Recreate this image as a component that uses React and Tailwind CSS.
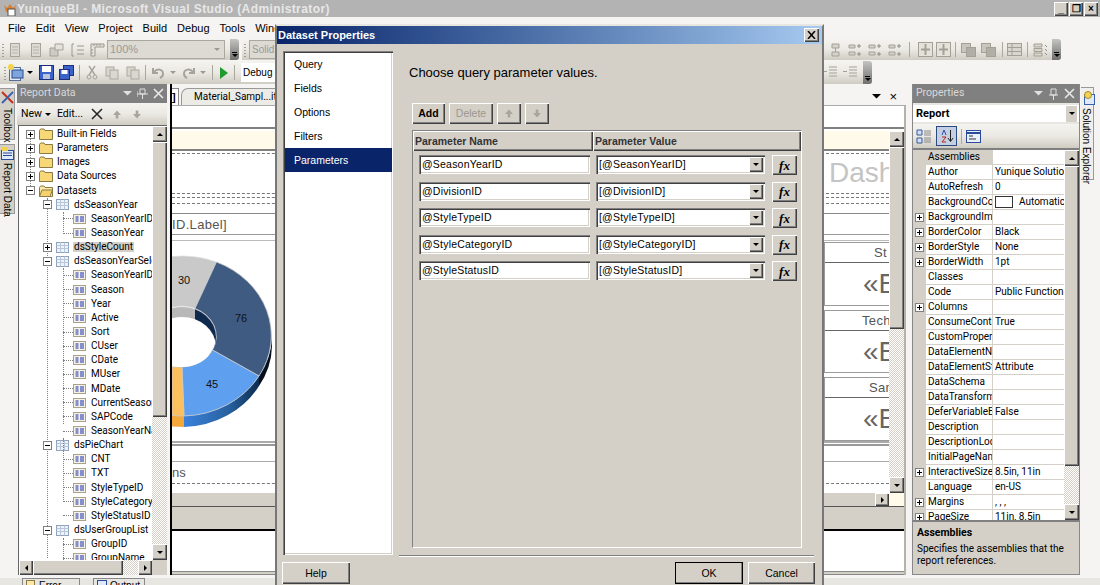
const raised = "bg-[#d4d0c8] shadow-[inset_1px_1px_0_#fff,inset_-1px_-1px_0_#404040,inset_-2px_-2px_0_#808080]";
const sunken = "shadow-[inset_1px_1px_0_#808080,inset_2px_2px_0_#404040,inset_-1px_-1px_0_#fff,inset_-2px_-2px_0_#d4d0c8]";
const toolbarBg = "bg-gradient-to-b from-[#f4f3ef] via-[#ebe9e3] to-[#cfccc3]";
const dither = "bg-[repeating-conic-gradient(#d4d0c8_0_25%,#fff_0_50%)] bg-[length:2px_2px]";

function Arrow({ dir = "down", color = "#000", big }) {
  const pts = { down: "0,0 6,0 3,3", up: "3,0 6,3 0,3", left: "3,0 3,6 0,3", right: "0,0 3,3 0,6" }[dir];
  const box = dir === "left" || dir === "right" ? [3, 6] : [6, 3];
  const k = big ? 1.5 : 1;
  return (
    <svg width={box[0] * k} height={box[1] * k} viewBox={`0 0 ${box[0]} ${box[1]}`} className="shrink-0">
      <polygon points={pts} fill={color} />
    </svg>
  );
}

function ScrollBtn({ dir, className = "" }) {
  return <div className={`${raised} flex items-center justify-center shrink-0 ${className}`}><Arrow dir={dir} /></div>;
}

function VScroll({ thumb, className = "" }) {
  return (
    <div className={`w-[15px] flex flex-col shrink-0 ${dither} ${className}`}>
      <ScrollBtn dir="up" className="h-[16px]" />
      <div className={`${raised} shrink-0`} style={{ height: thumb }} />
      <div className="flex-1" />
      <ScrollBtn dir="down" className="h-[16px]" />
    </div>
  );
}

function Expander({ open }) {
  return (
    <svg width="9" height="9" viewBox="0 0 9 9" className="shrink-0 bg-white relative">
      <rect x="0.5" y="0.5" width="8" height="8" fill="#fff" stroke="#808080" />
      <path d={open ? "M2 4.5h5" : "M2 4.5h5M4.5 2v5"} stroke="#000" />
    </svg>
  );
}

function Folder({ open }) {
  return (
    <svg width="14" height="12" viewBox="0 0 14 12" className="shrink-0">
      <path d="M0.5 2.5 L1.5 1 H5 L6 2.5 H13.5 V11.5 H0.5 Z" fill={open ? "#fbe7a6" : "#f8d777"} stroke="#8a7a45" />
      {open && <path d="M0.5 11.5 L3 5 H13.5 L11 11.5 Z" fill="#f6d26e" stroke="#8a7a45" />}
    </svg>
  );
}

function TableIcon() {
  return (
    <svg width="13" height="11" viewBox="0 0 13 11" className="shrink-0">
      <rect x="0.5" y="0.5" width="12" height="10" fill="#eef3fb" stroke="#8ea2bc" />
      <path d="M0.5 3.5h12M0.5 6.5h12M4.5 0.5v10M8.5 0.5v10" stroke="#b9c6d8" />
    </svg>
  );
}

function FieldIcon() {
  return (
    <svg width="13" height="10" viewBox="0 0 13 10" className="shrink-0">
      <rect x="0.5" y="0.5" width="12" height="9" fill="#f4f1e6" stroke="#a9a288" />
      <path d="M2.5 3h3M2.5 5h3M2.5 7h3M7 3h4M7 5h4M7 7h4" stroke="#1a2fb0" />
    </svg>
  );
}

const treeRows = [
  [0, "Built-in Fields"], [0, "Parameters"], [0, "Images"], [0, "Data Sources"], [0, "Datasets", "open"],
  [1, "dsSeasonYear", "open"], [2, "SeasonYearID"], [2, "SeasonYear"],
  [1, "dsStyleCount", "sel"], [1, "dsSeasonYearSele", "open"],
  [2, "SeasonYearID"], [2, "Season"], [2, "Year"], [2, "Active"], [2, "Sort"], [2, "CUser"], [2, "CDate"], [2, "MUser"], [2, "MDate"],
  [2, "CurrentSeason"], [2, "SAPCode"], [2, "SeasonYearNa"],
  [1, "dsPieChart", "open"], [2, "CNT"], [2, "TXT"], [2, "StyleTypeID"], [2, "StyleCategory"], [2, "StyleStatusID"],
  [1, "dsUserGroupList", "open"], [2, "GroupID"], [2, "GroupName"],
];

function TreeRow({ level, label, flag }) {
  return (
    <div className="h-[14.15px] flex items-center whitespace-nowrap">
      {level === 0 && (
        <div className="flex items-center pl-[7px] gap-[4px]">
          <Expander open={flag === "open"} />
          <Folder open={flag === "open"} />
          <span>{label}</span>
        </div>
      )}
      {level === 1 && (
        <div className="flex items-center pl-[24px] gap-[4px]">
          <Expander open={flag === "open"} />
          <TableIcon />
          <span className={`px-[1px] ${flag === "sel" ? "bg-[#d4d0c8]" : ""}`}>{label}</span>
        </div>
      )}
      {level === 2 && (
        <div className="flex items-center pl-[44px]">
          <div className="w-[10px] border-t border-dotted border-[#808080]" />
          <FieldIcon />
          <span className="ml-[5px]">{label}</span>
        </div>
      )}
    </div>
  );
}

function ReportDataPanel() {
  return (
    <div className="w-[150px] flex flex-col shrink-0 mr-[3px] mb-[3px] font-['Roboto',sans-serif]">
      <div className="h-[19px] bg-[#808080] flex items-center text-[#d8d8d8] pl-[3px] shrink-0 text-[10.5px]">
        <span className="flex-1">Report Data</span>
        <Arrow color="#e0e0e0" big />
        <svg width="11" height="11" viewBox="0 0 11 11" className="ml-[5px]"><path d="M3 1h5v5H3zM0 6h11M5.5 6v5M0 3v6" stroke="#e0e0e0" fill="none" /></svg>
        <svg width="11" height="11" viewBox="0 0 11 11" className="ml-[5px] mr-[3px]"><path d="M1 1l9 9M10 1l-9 9" stroke="#e8e8e8" strokeWidth="1.6" /></svg>
      </div>
      <div className={`h-[22px] flex items-center pl-[4px] gap-[3px] shrink-0 text-[10.5px] ${toolbarBg}`}>
        <span>New</span><Arrow />
        <span className="ml-[3px]">Edit...</span>
        <svg width="12" height="12" viewBox="0 0 12 12" className="ml-[5px]"><path d="M1 1l10 10M11 1L1 11" stroke="#222" strokeWidth="1.5" /></svg>
        <svg width="8" height="9" viewBox="0 0 9 9" className="ml-[7px]"><path d="M4.5 0L9 5H6v4H3V5H0z" fill="#a8a59d" /></svg>
        <svg width="8" height="9" viewBox="0 0 9 9" className="ml-[9px]"><path d="M4.5 9L9 4H6V0H3v4H0z" fill="#a8a59d" /></svg>
      </div>
      <div className="flex-1 min-h-0 flex flex-col bg-[#d4d0c8] border-t border-l border-[#666] ml-[1px]">
        <div className="flex-1 min-h-0 flex">
          <div className="flex-1 min-w-0 bg-white overflow-hidden relative pt-[1px]">
            <div className="absolute left-[11px] top-[8px] h-[58px] border-l border-dotted border-[#808080]" />
            <div className="absolute left-[28px] top-[72px] h-[360px] border-l border-dotted border-[#808080]" />
            <div className="absolute left-[44px] top-[86px] h-[20px] border-l border-dotted border-[#808080]" />
            <div className="absolute left-[44px] top-[142px] h-[156px] border-l border-dotted border-[#808080]" />
            <div className="absolute left-[44px] top-[312px] h-[64px] border-l border-dotted border-[#808080]" />
            <div className="absolute left-[44px] top-[412px] h-[24px] border-l border-dotted border-[#808080]" />
            {treeRows.map((r, i) => <TreeRow key={i} level={r[0]} label={r[1]} flag={r[2]} />)}
          </div>
          <VScroll thumb={275} />
        </div>
        <div className="h-[15px] flex shrink-0 mr-[15px]">
          <ScrollBtn dir="left" className="w-[14px]" />
          <div className={`${raised} w-[90px]`} />
          <div className={`flex-1 ${dither}`} />
          <ScrollBtn dir="right" className="w-[14px]" />
        </div>
      </div>
    </div>
  );
}

function Donut() {
  return (
    <svg width="106" height="190" viewBox="171 245 106 190" className="shrink-0 mt-[4px]">
      <defs>
        <linearGradient id="side" x1="0" x2="1" y1="0" y2="0">
          <stop offset="0" stopColor="#3b82dc" />
          <stop offset="0.6" stopColor="#27609f" />
          <stop offset="1" stopColor="#0d2c50" />
        </linearGradient>
        <clipPath id="hole"><ellipse cx="181" cy="337" rx="34" ry="30" /></clipPath>
      </defs>
      <path d="M258 376 A90 80 0 0 0 271 336 L271 346 A90 80 0 0 1 258 386 Z" fill="#06101f" />
      <path d="M258 376 A90 80 0 0 1 183 416 L183 427 A90 80 0 0 0 258 386 Z" fill="url(#side)" />
      <path d="M183 416 A90 80 0 0 1 171 415.5 L171 426.5 L183 427 Z" fill="#f5a83a" />
      <path d="M171 256.5 A90 80 0 0 1 215.5 262 L194 308.5 A34 30 0 0 0 171 307.5 Z" fill="#c9c9c9" stroke="#ddd" strokeWidth="0.6" />
      <path d="M215.5 262 A90 80 0 0 1 258 376 L211.5 350 A34 30 0 0 0 194 308.5 Z" fill="#3f5b82" stroke="#c8c8c8" strokeWidth="0.8" />
      <path d="M258 376 A90 80 0 0 1 183 416 L181 367 A34 30 0 0 0 211.5 350 Z" fill="#5f9ff0" stroke="#c8c8c8" strokeWidth="0.8" />
      <path d="M183 416 A90 80 0 0 1 171 415.5 L171 367 L181 367 Z" fill="#fbbf5e" stroke="#c8c8c8" strokeWidth="0.8" />
      <g clipPath="url(#hole)">
        <rect x="171" y="305" width="23" height="20" fill="#b8b8b8" />
        <rect x="194" y="305" width="24" height="50" fill="#10294f" />
        <ellipse cx="181" cy="347" rx="34" ry="30" fill="#fff" />
      </g>
      <g fontSize="11" fill="#111" fontFamily="'Liberation Sans', sans-serif" textAnchor="middle">
        <text x="183" y="284">30</text>
        <text x="240" y="322">76</text>
        <text x="211" y="388">45</text>
      </g>
    </svg>
  );
}

function ReportCard({ title, pl }) {
  return (
    <div className="h-[64px] border border-r-0 border-[#9a9a9a] overflow-hidden whitespace-nowrap text-[#555]">
      <div className="h-[20px] border-b border-[#666] flex items-center text-[13px] tracking-wide" style={{ paddingLeft: pl }}>{title}</div>
      <div className="pl-[38px] text-[28px] leading-[42px] text-[#666]">«E</div>
    </div>
  );
}

function ReportCanvas() {
  return (
    <div className="w-[736px] shrink-0 border-l-2 border-black flex flex-col min-h-0 mb-[3px]">
      <div className="h-[22px] flex items-start pt-[4px] shrink-0 bg-[#f5f4f2] border-b border-[#aaa]">
        <div className="h-[17px] w-[7px] bg-white border-t border-r border-[#888] text-[11px] flex items-center font-bold shrink-0">]</div>
        <div className="h-[17px] w-[96px] ml-[2px] border-t border-l border-[#999] rounded-tl-[7px] bg-[#ecebe6] overflow-hidden whitespace-nowrap pl-[12px] leading-[15px] font-['Roboto',sans-serif]">Material_Sampl...it</div>
        <div className="flex-1" />
        <div className="flex items-center gap-[8px] pr-[9px] pt-[2px]"><Arrow big /><span className="text-[13px] leading-none">×</span></div>
      </div>
      <div className="flex-1 min-h-0 flex flex-col border-r-2 border-[#b5b2aa]">
        <div className="h-[21px] bg-white shrink-0" />
        <div className="h-[2px] bg-[#808080] shrink-0" />
        <div className="h-[2px] bg-white shrink-0" />
        <div className="flex h-[362px] shrink-0">
          <div className="flex-1 min-w-0 flex flex-col overflow-hidden bg-white">
            <div className="h-[18px] bg-[#fffaea] shrink-0" />
            <div className="h-[2px] bg-[#808080] shrink-0" />
            <div className="h-[3px] border-b border-dashed border-[#777] shrink-0" />
            <div className="h-[40px] border-b border-dashed border-[#777] flex justify-end shrink-0">
              <div className="w-[60px] overflow-hidden text-[28px] leading-[38px] text-[#c4c4c4]">Dash</div>
            </div>
            <div className="h-[4px] border-b border-dashed border-[#777] shrink-0" />
            <div className="h-[6px] border-b border-dashed border-[#777] shrink-0" />
            <div className="h-[10px] border-b border-[#888] shrink-0" />
            <div className="h-[21px] border-b border-[#999] flex items-center text-[13px] text-[#555] tracking-wide shrink-0 whitespace-nowrap">ID.Label]</div>
            <div className="h-[6px] border-b border-[#bbb] shrink-0" />
            <div className="h-[202px] border-b-2 border-[#aaa] flex justify-between shrink-0">
              <Donut />
              <div className="w-[65px] shrink-0 flex flex-col gap-[4px] pt-[1px]">
                <ReportCard title="St" pl={49} />
                <ReportCard title="Tech" pl={37} />
                <ReportCard title="Sam" pl={44} />
              </div>
            </div>
            <div className="h-[3px] border-b-2 border-[#999] shrink-0" />
            <div className="h-[16px] border-b border-[#aaa] shrink-0" />
            <div className="h-[22px] border-b border-dashed border-[#777] flex items-center text-[13px] text-[#555] shrink-0">ns</div>
          </div>
          <VScroll thumb={182} />
        </div>
        <div className="h-[14px] flex shrink-0 bg-[#d4d0c8] border-b border-[#555]">
          <div className="flex-1" />
          <ScrollBtn dir="right" className="w-[14px]" />
          <div className="w-[15px] bg-[#fffaea]" />
        </div>
        <div className="h-[24px] bg-[#d4d0c8] border-b-2 border-black shrink-0" />
        <div className="h-[40px] bg-white shrink-0" />
        <div className="flex-1 bg-[#d4d0c8] border-y border-[#888]" />
      </div>
    </div>
  );
}

const props = [
  ["Assemblies", "", 0], ["Author", "Yunique Solution", 0], ["AutoRefresh", "0", 0], ["BackgroundCol", "swatch", 0],
  ["BackgroundIma", "", 1], ["BorderColor", "Black", 1], ["BorderStyle", "None", 1], ["BorderWidth", "1pt", 1],
  ["Classes", "", 0], ["Code", "Public Function F", 0], ["Columns", "", 1], ["ConsumeConta", "True", 0],
  ["CustomPropert", "", 0], ["DataElementNa", "", 0], ["DataElementSt", "Attribute", 0], ["DataSchema", "", 0],
  ["DataTransform", "", 0], ["DeferVariableE", "False", 0], ["Description", "", 0], ["DescriptionLocl", "", 0],
  ["InitialPageNam", "", 0], ["InteractiveSize", "8.5in, 11in", 1], ["Language", "en-US", 0], ["Margins", ", , ,", 1], ["PageSize", "11in, 8.5in", 1],
];

function PropRow({ name, value, plus, index }) {
  return (
    <div className="h-[15px] flex shrink-0 border-b border-[#d4d0c8] whitespace-nowrap">
      <div className="w-[13px] bg-[#d4d0c8] flex items-center justify-center shrink-0">{plus ? <Expander /> : null}</div>
      <div className={`w-[67px] pl-[2px] overflow-hidden border-r border-[#d4d0c8] shrink-0 leading-[14px] ${index === 0 ? "bg-[#d4d0c8]" : ""}`}>{name}</div>
      <div className="flex-1 min-w-0 pl-[2px] overflow-hidden leading-[14px] flex items-center">
        {value === "swatch" ? (
          <>
            <div className="w-[18px] h-[12px] bg-white border border-[#333] shrink-0" />
            <span className="ml-[6px]">Automatic</span>
          </>
        ) : value}
      </div>
    </div>
  );
}

function PropertiesPanel() {
  return (
    <div className="w-[168px] shrink-0 flex flex-col border-x border-[#888] border-b mb-[3px] font-['Roboto',sans-serif]">
      <div className="h-[19px] bg-[#808080] flex items-center text-[#d8d8d8] pl-[3px] shrink-0 text-[10.5px]">
        <span className="flex-1">Properties</span>
        <Arrow color="#e0e0e0" big />
        <svg width="9" height="12" viewBox="0 0 9 12" className="ml-[6px]"><path d="M2 1h5v6H2zM0 7h9M4.5 7v5" stroke="#e0e0e0" fill="none" /></svg>
        <svg width="11" height="11" viewBox="0 0 11 11" className="ml-[6px] mr-[4px]"><path d="M1 1l9 9M10 1l-9 9" stroke="#e8e8e8" strokeWidth="1.6" /></svg>
      </div>
      <div className="h-[21px] bg-white border-y-2 border-[#e8e6e0] flex items-center pl-[3px] font-bold text-[11px] shrink-0 pr-[2px]">
        <span className="flex-1">Report</span>
        <div className="w-[11px] h-[16px] bg-[#d4d0c8] flex items-center justify-center"><Arrow /></div>
      </div>
      <div className={`h-[24px] flex items-center pl-[3px] gap-[2px] shrink-0 ${toolbarBg}`}>
        <svg width="16" height="15" viewBox="0 0 16 15"><path d="M1 1h5v5H1zM1 9h5v5H1z" fill="#cfe0f7" stroke="#345a9c" /><path d="M8 2h7M8 4h7M8 6h7M8 9h7M8 11h7M8 13h7" stroke="#8a8a8a" /></svg>
        <div className="w-[21px] h-[20px] bg-[#c4cfe2] border border-[#2c4a82] flex items-center justify-center ml-[2px]">
          <svg width="14" height="14" viewBox="0 0 14 14"><path d="M10.5 1v11M8 9l2.5 3.5L13 9" stroke="#222" fill="none" /><path d="M2 6l2-5 2 5" stroke="#2a4db0" fill="none" /><path d="M2 8h4l-4 5h4" stroke="#c02020" fill="none" /></svg>
        </div>
        <div className="w-[1px] h-[15px] bg-[#aaa] mx-[2px]" />
        <svg width="15" height="13" viewBox="0 0 15 13"><rect x="0.5" y="0.5" width="14" height="12" fill="#e8f0fb" stroke="#2c4a9c" /><path d="M0.5 3h14" stroke="#2c4a9c" strokeWidth="2" /><path d="M3 6h4M3 9h7" stroke="#333" /></svg>
      </div>
      <div className="flex-1 min-h-0 flex border-t-2 border-[#808080] bg-white">
        <div className="flex-1 min-w-0 flex flex-col overflow-hidden">
          {props.map((p, i) => <PropRow key={i} index={i} name={p[0]} value={p[1]} plus={p[2]} />)}
        </div>
        <VScroll thumb={300} />
      </div>
      <div className="h-[54px] bg-[#d4d0c8] border-t-2 border-[#808080] px-[4px] pt-[5px] shrink-0 leading-[12px]">
        <div className="font-bold mb-[4px] text-[10.5px]">Assemblies</div>
        <div>Specifies the assemblies that the report references.</div>
      </div>
    </div>
  );
}

const ToolGlyph = ({ kind }) => {
  if (kind === "grip") return <svg width="3" height="14" viewBox="0 0 3 14" className="shrink-0"><path d="M1 1v1M1 4v1M1 7v1M1 10v1M1 13v1" stroke="#8a8a80" strokeWidth="1.5" /></svg>;
  if (kind === "sep") return <div className="w-[1px] h-[15px] bg-[#aaa89e] shrink-0" />;
  if (kind === "doc") return <svg width="12" height="14" viewBox="0 0 12 14" className="shrink-0"><rect x="1.5" y="0.5" width="9" height="13" fill="#dcdad2" stroke="#a6a49a" /><path d="M3 4h6M3 7h6M3 10h6" stroke="#b5b3a9" /></svg>;
  if (kind === "props") return <svg width="15" height="14" viewBox="0 0 15 14" className="shrink-0"><path d="M1 5h8v8H1z" fill="#cdcbc2" stroke="#a3a197" /><path d="M6 1h8v6H6z" fill="#e4e2da" stroke="#a3a197" /></svg>;
  if (kind === "align") return <svg width="15" height="14" viewBox="0 0 15 14" className="shrink-0"><path d="M4 1H2v12h2M7 3h7M7 7h7M7 11h7" stroke="#9a988e" fill="none" /></svg>;
  if (kind === "ruler") return <svg width="15" height="14" viewBox="0 0 15 14" className="shrink-0"><path d="M1 1h13v3H5v9H1z" fill="#e4e2da" stroke="#9a988e" /><path d="M4 1v2M7 1v2M10 1v2M1 7h2M1 10h2" stroke="#9a988e" /></svg>;
  if (kind === "save") return <svg width="15" height="15" viewBox="0 0 15 15" className="shrink-0"><rect x="0.5" y="0.5" width="14" height="14" fill="#3a62c8" stroke="#1c2f78" /><rect x="3" y="1" width="9" height="6" fill="#fff" /><rect x="4" y="9" width="7" height="5" fill="#b9c4de" /></svg>;
  if (kind === "saveall") return <svg width="15" height="15" viewBox="0 0 15 15" className="shrink-0"><rect x="4.5" y="0.5" width="10" height="10" fill="#3a62c8" stroke="#1c2f78" /><rect x="0.5" y="4.5" width="10" height="10" fill="#3a62c8" stroke="#1c2f78" /><rect x="2.5" y="5" width="6" height="4" fill="#fff" /></svg>;
  if (kind === "new") return <svg width="18" height="17" viewBox="0 0 18 17" className="shrink-0"><rect x="2.5" y="3.5" width="11" height="13" fill="#dfe9f7" stroke="#566e9c" /><rect x="5" y="6" width="11" height="8" fill="#7fa6dc" stroke="#2c4a8c" /><circle cx="4" cy="3" r="3" fill="#f4d34c" /></svg>;
  if (kind === "cut") return <svg width="12" height="15" viewBox="0 0 12 15" className="shrink-0"><path d="M3 1l6 9M9 1l-6 9" stroke="#a5a39a" strokeWidth="1.4" /><circle cx="3" cy="12" r="2" fill="none" stroke="#a5a39a" /><circle cx="9" cy="12" r="2" fill="none" stroke="#a5a39a" /></svg>;
  if (kind === "copy") return <svg width="14" height="14" viewBox="0 0 14 14" className="shrink-0"><rect x="1" y="1" width="8" height="9" fill="#d9d7cf" stroke="#aaa89e" /><rect x="5" y="4" width="8" height="9" fill="#d9d7cf" stroke="#aaa89e" /></svg>;
  if (kind === "undo") return <svg width="13" height="13" viewBox="0 0 13 13" className="shrink-0"><path d="M1 2v5h5M2 6c3-4 9-3 9 2 0 2-1 3-3 4" fill="none" stroke="#a5a39a" strokeWidth="2" /></svg>;
  if (kind === "redo") return <svg width="13" height="13" viewBox="0 0 13 13" className="shrink-0"><path d="M12 2v5H7M11 6C8 2 2 3 2 8c0 2 1 3 3 4" fill="none" stroke="#a5a39a" strokeWidth="2" /></svg>;
  if (kind === "play") return <svg width="8" height="12" viewBox="0 0 8 12" className="shrink-0"><polygon points="0,0 8,6 0,12" fill="#1f9a2e" /></svg>;
  if (kind === "drop") return <Arrow color="#999" />;
  if (kind === "dropk") return <Arrow />;
  if (kind === "layout") return <svg width="13" height="14" viewBox="0 0 13 14" className="shrink-0"><path d="M3 1h7v4H3zM3 9h7v4H3zM6.5 5v4" fill="#d5d3ca" stroke="#a3a197" /></svg>;
  if (kind === "dist") return <svg width="15" height="14" viewBox="0 0 15 14" className="shrink-0"><path d="M1 2h6v3H1zM1 9h6v3H1z" fill="#d5d3ca" stroke="#a3a197" /><path d="M11 1v4M9 3h4M11 9v4M9 11h4" stroke="#8f8d85" /></svg>;
  if (kind === "box") return <svg width="15" height="15" viewBox="0 0 15 15" className="shrink-0"><rect x="0.5" y="0.5" width="14" height="14" fill="#e4e2da" stroke="#a3a197" /><path d="M7.5 2v11M3 7.5h9" stroke="#a3a197" strokeWidth="2" /></svg>;
  if (kind === "stack") return <svg width="15" height="14" viewBox="0 0 15 14" className="shrink-0"><rect x="0.5" y="0.5" width="9" height="9" fill="#c8c6bd" stroke="#a3a197" /><rect x="5.5" y="4.5" width="9" height="9" fill="#b0aea5" stroke="#a3a197" /></svg>;
  if (kind === "grid") return <svg width="15" height="13" viewBox="0 0 15 13" className="shrink-0"><rect x="0.5" y="0.5" width="14" height="12" fill="#d8d6cd" stroke="#a3a197" /><path d="M0.5 4.5h14M0.5 8.5h14M5 0.5v12" stroke="#a3a197" /></svg>;
  if (kind === "rows") return <svg width="15" height="14" viewBox="0 0 15 14" className="shrink-0"><path d="M1 1h8v3H1zM1 5.5h8v3H1zM1 10h8v3H1z" fill="#d8d6cd" stroke="#a3a197" /><path d="M12 2l2 2M12 6l2 2M12 10l2 2" stroke="#8f8d85" /></svg>;
  if (kind === "indent") return <svg width="14" height="13" viewBox="0 0 14 13" className="shrink-0"><path d="M6 1h8M6 4h8M6 7h8M6 10h8M0 5.5h4" stroke="#a3a197" /></svg>;
  return null;
};

function Chevron() {
  return (
    <div className="w-[9px] h-full bg-gradient-to-b from-[#c4c4c0] to-[#6f6f6f] rounded-r-[3px] flex flex-col items-center justify-end pb-[3px] shrink-0">
      <div className="w-[5px] h-[1px] bg-black mb-[1px]" />
      <Arrow />
    </div>
  );
}

// each item is [glyph, cell width], cell widths follow the button spacing of the toolbars
function Tools({ items }) {
  return (
    <div className="flex items-center h-full">
      {items.map(([k, w], i) => (
        <div key={i} className="flex items-center justify-center h-full shrink-0" style={{ width: w }}>
          <ToolGlyph kind={k} />
        </div>
      ))}
    </div>
  );
}

function Toolbars() {
  return (
    <>
      <div className="h-[21px] flex justify-between shrink-0 mb-[1px]">
        <div className="flex">
          <div className={`w-[239px] h-full flex items-center pl-[2px] rounded-r-[3px] ${toolbarBg}`}>
            <Tools items={[["grip", 3], ["doc", 20], ["doc", 21], ["props", 21], ["align", 20], ["ruler", 20]]} />
            <div className="w-[118px] h-[19px] bg-[#dcdad2] border border-[#aaa89e] flex items-center text-[#999] pl-[2px] shrink-0 text-[11px]">
              <span className="flex-1">100%</span><span className="mr-[4px]"><Arrow color="#999" /></span>
            </div>
            <div className="flex-1" />
            <Chevron />
          </div>
          <div className={`w-[35px] h-full ml-[3px] flex items-center pl-[2px] ${toolbarBg}`}>
            <ToolGlyph kind="grip" />
            <div className="ml-[2px] flex-1 h-[19px] bg-[#dcdad2] border border-[#aaa89e] text-[#999] pl-[2px] leading-[17px]">Solid</div>
          </div>
        </div>
        <div className={`w-[238px] h-full mr-[39px] flex items-center pl-[2px] rounded-r-[3px] ${toolbarBg}`}>
          <Tools items={[["layout", 20], ["dist", 20], ["dist", 20], ["dist", 20], ["sep", 8], ["box", 24], ["box", 12], ["sep", 12], ["stack", 14], ["stack", 26], ["sep", 2], ["grid", 22], ["sep", 4], ["rows", 22]]} />
          <div className="flex-1" />
          <Chevron />
        </div>
      </div>
      <div className="h-[23px] flex justify-between shrink-0">
        <div className={`w-[277px] h-full flex items-center pl-[3px] ${toolbarBg}`}>
          <Tools items={[["grip", 5], ["new", 16], ["dropk", 12], ["save", 20], ["saveall", 20], ["sep", 6], ["cut", 20], ["copy", 20], ["copy", 22], ["sep", 2], ["undo", 24], ["drop", 6], ["redo", 24], ["drop", 6], ["sep", 12], ["play", 12], ["sep", 8]]} />
          <div className="ml-[3px] flex-1 h-[19px] bg-white pl-[2px] leading-[19px]">Debug</div>
        </div>
        <div className={`w-[49px] h-full mr-[228px] flex items-center rounded-r-[3px] ${toolbarBg}`}>
          <Tools items={[["indent", 14], ["indent", 26]]} />
          <div className="flex-1" />
          <Chevron />
        </div>
      </div>
    </>
  );
}

function DlgButton({ children, disabled, className = "" }) {
  return (
    <div className={`${raised} flex items-center justify-center ${disabled ? "text-[#9a978f]" : ""} ${className}`}>{children}</div>
  );
}

const params = ["SeasonYearID", "DivisionID", "StyleTypeID", "StyleCategoryID", "StyleStatusID"];

function ParamRow({ name }) {
  return (
    <div className="h-[26.5px] flex items-start shrink-0">
      <div className={`w-[171px] h-[19px] bg-white ml-[6px] pl-[3px] leading-[19px] tracking-[0.2px] ${sunken}`}>@{name}</div>
      <div className={`w-[169px] h-[19px] bg-white ml-[6px] pl-[3px] pr-[2px] flex items-center tracking-[0.2px] ${sunken}`}>
        <span className="flex-1">[@{name}]</span>
        <div className={`${raised} w-[14px] h-[15px] flex items-center justify-center`}><Arrow /></div>
      </div>
      <DlgButton className="w-[25px] h-[20px] ml-[7px] font-['Liberation_Serif',serif] italic font-bold text-[13px]">fx</DlgButton>
    </div>
  );
}

function DatasetDialog() {
  const pages = ["Query", "Fields", "Options", "Filters", "Parameters"];
  return (
    <div className="absolute left-[275px] top-[24px] w-[549px] h-[561px] bg-[#d4d0c8] border-x-2 border-t-2 border-x-[#777] border-t-[#e8e6e0] flex flex-col text-[10.5px]">
      <div className="h-[18px] bg-gradient-to-r from-[#0a246a] to-[#a6caf0] flex items-center pl-[1px] text-white font-bold text-[11px] shrink-0">
        <span className="flex-1">Dataset Properties</span>
        <div className={`${raised} w-[15px] h-[14px] mr-[3px] flex items-center justify-center text-black`}>
          <svg width="9" height="8" viewBox="0 0 9 8"><path d="M1 0l7 8M8 0L1 8" stroke="#000" strokeWidth="1.5" /></svg>
        </div>
      </div>
      <div className="flex-1 min-h-0 flex pl-[6px] pr-[8px] pt-[7px]">
        <div className={`w-[110px] h-[504px] bg-white pt-[1px] pb-[2px] pl-[2px] pr-[1px] shrink-0 ${sunken}`}>
          {pages.map((p) => (
            <div key={p} className={`h-[24px] leading-[24px] pl-[9px] ${p === "Parameters" ? "bg-[#0a246a] text-white" : ""}`}>{p}</div>
          ))}
        </div>
        <div className="flex-1 min-w-0 flex flex-col pl-[6px]">
          <div className="h-[52px] pl-[10px] pt-[15px] text-[13px] shrink-0">Choose query parameter values.</div>
          <div className="flex h-[21px] ml-[13px] gap-[4px] shrink-0">
            <DlgButton className="w-[33px] font-bold">Add</DlgButton>
            <DlgButton disabled className="w-[44px]">Delete</DlgButton>
            <DlgButton disabled className="w-[24px]"><svg width="8" height="9" viewBox="0 0 9 9"><path d="M4.5 0L9 5H6v4H3V5H0z" fill="#a8a59d" /></svg></DlgButton>
            <DlgButton disabled className="w-[24px]"><svg width="8" height="9" viewBox="0 0 9 9"><path d="M4.5 9L9 4H6V0H3v4H0z" fill="#a8a59d" /></svg></DlgButton>
          </div>
          <div className="ml-[13px] mt-[6px] w-[390px] h-[418px] border border-[#808080] border-b-white border-r-white flex flex-col shrink-0">
            <div className="h-[20px] flex shrink-0 font-bold text-[#333]">
              <div className={`w-[180px] ${raised} pl-[2px] leading-[20px]`}>Parameter Name</div>
              <div className={`flex-1 ${raised} pl-[2px] leading-[20px]`}>Parameter Value</div>
            </div>
            <div className="pt-[4px]">
              {params.map((p) => <ParamRow key={p} name={p} />)}
            </div>
          </div>
          <div className="mt-[7px] h-[2px] border-t border-[#808080] border-b-white border-b shrink-0" />
        </div>
      </div>
      <div className="h-[30px] flex pl-[5px] pr-[7px] pt-[7px] shrink-0">
        <DlgButton className="w-[68px] h-[22px]">Help</DlgButton>
        <div className="flex-1" />
        <DlgButton className="w-[68px] h-[22px] outline outline-1 -outline-offset-1 outline-black">OK</DlgButton>
        <DlgButton className="w-[67px] h-[22px] ml-[5px]">Cancel</DlgButton>
      </div>
    </div>
  );
}

export default function App() {
  const menus = ["File", "Edit", "View", "Project", "Build", "Debug", "Tools", "Wind"];
  return (
    <div className="w-[1100px] h-[585px] relative overflow-hidden bg-[#f5f4f2] flex flex-col text-[10px] text-black font-['Liberation_Sans',Arial,sans-serif] leading-none">
      <div className="h-[17px] bg-[#b3b3b3] flex items-center pl-[3px] shrink-0">
        <svg width="14" height="14" viewBox="0 0 14 14"><path d="M1 3l3 3 3-4 3 4 3-3-2 7H3z" fill="#d77f33" /><rect x="5" y="7" width="7" height="7" fill="#fff" stroke="#555" /></svg>
        <span className="text-[#e8e8e8] font-bold text-[12px] tracking-[0.4px] flex-1">YuniqueBI - Microsoft Visual Studio (Administrator)</span>
        <div className="flex gap-[1px] mr-[2px]">
          {["_", "❐", "×"].map((c) => (
            <div key={c} className={`${raised} w-[14px] h-[14px] flex items-center justify-center font-bold text-[10px]`}>{c}</div>
          ))}
        </div>
      </div>
      <div className="h-[22px] flex items-center pl-[8px] gap-[10px] text-[11px] shrink-0">
        {menus.map((m) => <span key={m}>{m}</span>)}
      </div>
      <Toolbars />
      <div className="flex-1 min-h-0 flex">
        <div className="w-[17px] shrink-0 flex flex-col pt-[4px] gap-[4px] items-start">
          <div className="w-[15px] h-[52px] bg-[#d4d0c8] border border-[#999] border-l-0 relative [writing-mode:vertical-rl] flex items-center pt-[19px] pr-[1px]">
            <svg width="13" height="13" viewBox="0 0 13 13" className="absolute left-[1px] top-[2px]"><path d="M1 1l11 11" stroke="#c03020" strokeWidth="2" /><path d="M12 1L1 12" stroke="#3a62b0" strokeWidth="2" /></svg>
            Toolbox
          </div>
          <div className="w-[15px] h-[70px] bg-[#d4d0c8] border border-[#999] border-l-0 relative [writing-mode:vertical-rl] flex items-center pt-[18px] pr-[1px] whitespace-nowrap">
            <svg width="13" height="13" viewBox="0 0 13 13" className="absolute left-[1px] top-[2px]"><rect x="0.5" y="3.5" width="12" height="9" fill="#dfe9f7" stroke="#2c4a9c" /><path d="M2 6h9M2 8.5h9" stroke="#2c4a9c" /><rect x="1" y="0" width="6" height="4" fill="#f4d34c" /></svg>
            Report Data
          </div>
        </div>
        <ReportDataPanel />
        <ReportCanvas />
        <div className="w-[6px] shrink-0" />
        <PropertiesPanel />
        <div className="flex-1 pt-[3px] pl-[1px]">
          <div className="h-[93px] bg-[#f0efeb] border border-[#999] border-l-0 relative [writing-mode:vertical-rl] flex items-center pt-[20px] pr-[2px] whitespace-nowrap">
            <svg width="14" height="14" viewBox="0 0 14 14" className="absolute left-[1px] top-[3px]"><rect x="2.5" y="3.5" width="10" height="10" fill="#dfe9f7" stroke="#3a62b0" /><circle cx="6" cy="4" r="3.5" fill="#f4d34c" stroke="#a08a30" /></svg>
            Solution Explorer
          </div>
        </div>
      </div>
      <div className="h-[7px] flex pl-[22px] shrink-0 bg-[#e8e6e0] overflow-hidden">
        <div className="w-[58px] h-[12px] border border-[#888] pl-[16px] pt-[2px] relative">
          <div className="absolute left-[3px] top-[1px] w-[9px] h-[9px] bg-[#fbe7a6] border border-[#8a7a45]" />
          Error List
        </div>
        <div className="w-[52px] h-[12px] ml-[13px] border border-[#888] pl-[16px] pt-[2px] relative">
          <div className="absolute left-[3px] top-[1px] w-[10px] h-[9px] bg-[#dfe9f7] border border-[#2c4a9c]" />
          Output
        </div>
      </div>
      <DatasetDialog />
    </div>
  );
}
